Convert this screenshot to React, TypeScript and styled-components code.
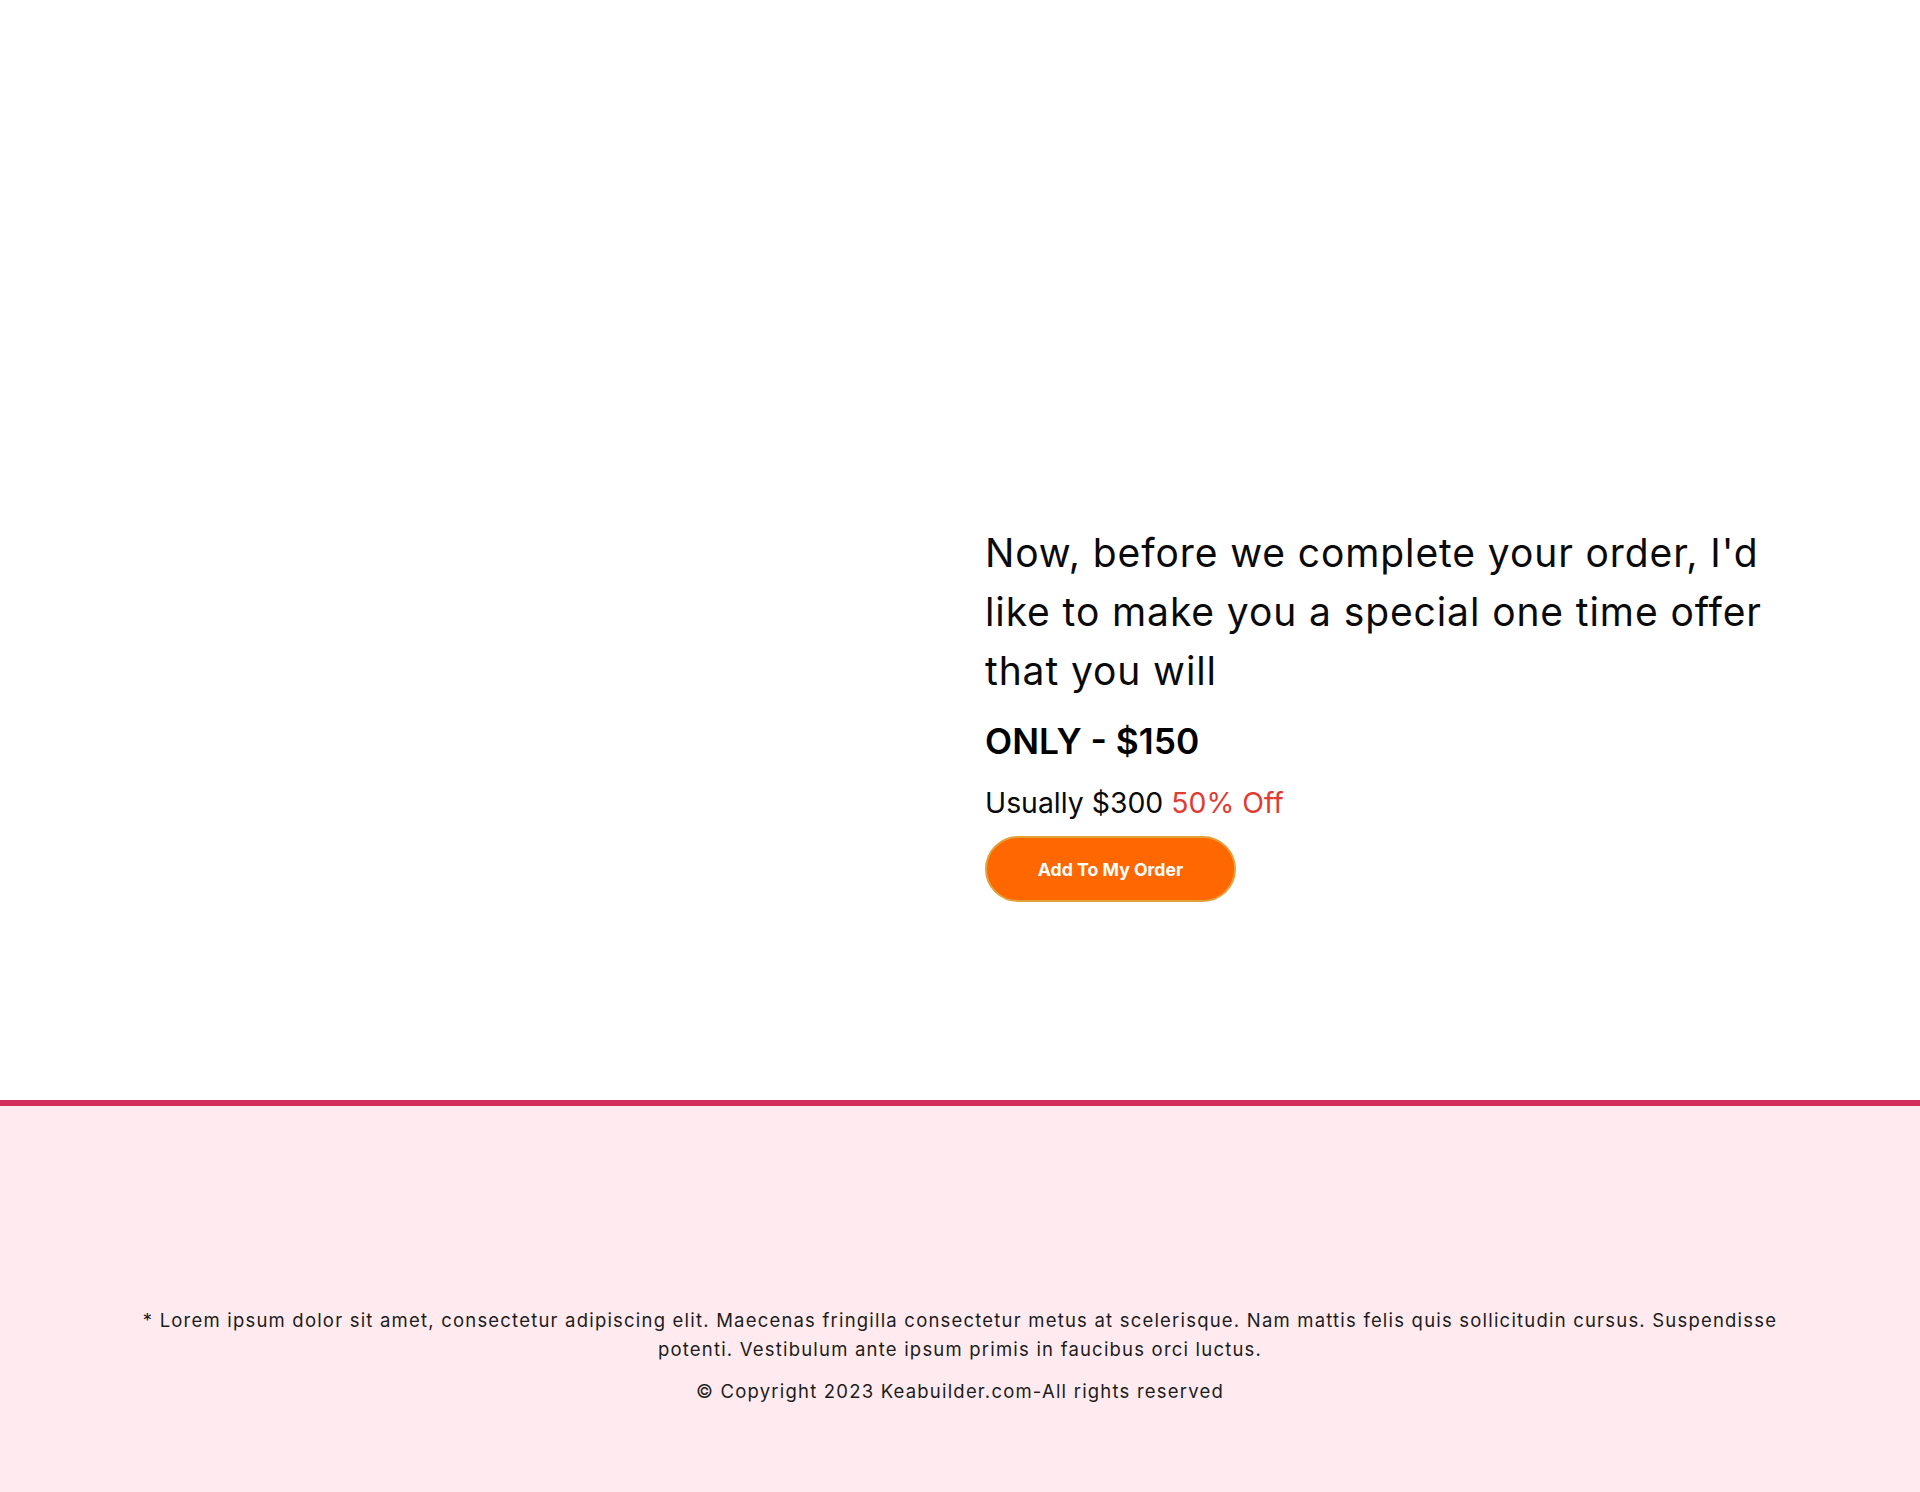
import React from "react";
import styled, { createGlobalStyle } from "styled-components";

const GlobalStyle = createGlobalStyle`
  html, body {
    margin: 0;
    padding: 0;
    background: #ffffff;
    font-family: "Inter", "Noto Sans", sans-serif;
    color: #000000;
  }
  * { box-sizing: border-box; }
`;

const Page = styled.div`
  width: 100%;
  min-height: 1492px;
  display: flex;
  flex-direction: column;
`;

const Hero = styled.section`
  height: 1100px;
  display: grid;
  grid-template-columns: 1fr 805px;
  padding: 523px 130px 0 160px;
`;

const MediaColumn = styled.div``;

const OfferColumn = styled.div`
  display: flex;
  flex-direction: column;
  align-items: flex-start;
`;

const Headline = styled.h2`
  margin: 0;
  font-size: 39px;
  line-height: 59px;
  font-weight: 400;
  letter-spacing: 0.9px;
  color: #0a0a0a;
`;

const Price = styled.h3`
  margin: 21px 0 0;
  font-size: 35.3px;
  line-height: 42px;
  font-weight: 600;
  color: #000000;
`;

const Usual = styled.p`
  margin: 23px 0 0;
  font-size: 28.4px;
  line-height: 34px;
  font-weight: 400;
  color: #0a0a0a;
`;

const Discount = styled.span`
  color: #e03c31;
`;

const OrderButton = styled.button`
  margin-top: 16px;
  width: 251px;
  height: 66px;
  border-radius: 33px;
  border: 2px solid #e2a23c;
  background: #ff6700;
  color: #ffffff;
  font-family: "Inter", "Noto Sans", sans-serif;
  font-weight: 700;
  font-size: 17.7px;
  cursor: pointer;
  display: flex;
  align-items: center;
  justify-content: center;
  padding: 0;
`;

const Footer = styled.footer`
  flex: 1;
  background: #ffebef;
  border-top: 6px solid #d42d5b;
  padding: 200px 20px 86px;
  display: flex;
  flex-direction: column;
  align-items: center;
`;

const FooterText = styled.p<{ $gap?: number }>`
  margin: ${(p) => p.$gap ?? 0}px 0 0;
  max-width: 1670px;
  text-align: center;
  font-size: 18.5px;
  line-height: 28.5px;
  letter-spacing: 1.2px;
  font-weight: 400;
  color: #1c1c1c;
`;

export default function App() {
  return (
    <>
      <GlobalStyle />
      <Page>
        <Hero>
          <MediaColumn />
          <OfferColumn>
            <Headline>
              Now, before we complete your order, I'd like to make you a special one time offer that you will
            </Headline>
            <Price>ONLY - $150</Price>
            <Usual>
              Usually $300 <Discount>50% Off</Discount>
            </Usual>
            <OrderButton type="button">Add To My Order</OrderButton>
          </OfferColumn>
        </Hero>
        <Footer>
          <FooterText>
            * Lorem ipsum dolor sit amet, consectetur adipiscing elit. Maecenas fringilla consectetur metus at scelerisque. Nam mattis felis quis sollicitudin cursus. Suspendisse potenti. Vestibulum ante ipsum primis in faucibus orci luctus.
          </FooterText>
          <FooterText $gap={14}>© Copyright 2023 Keabuilder.com-All rights reserved</FooterText>
        </Footer>
      </Page>
    </>
  );
}
